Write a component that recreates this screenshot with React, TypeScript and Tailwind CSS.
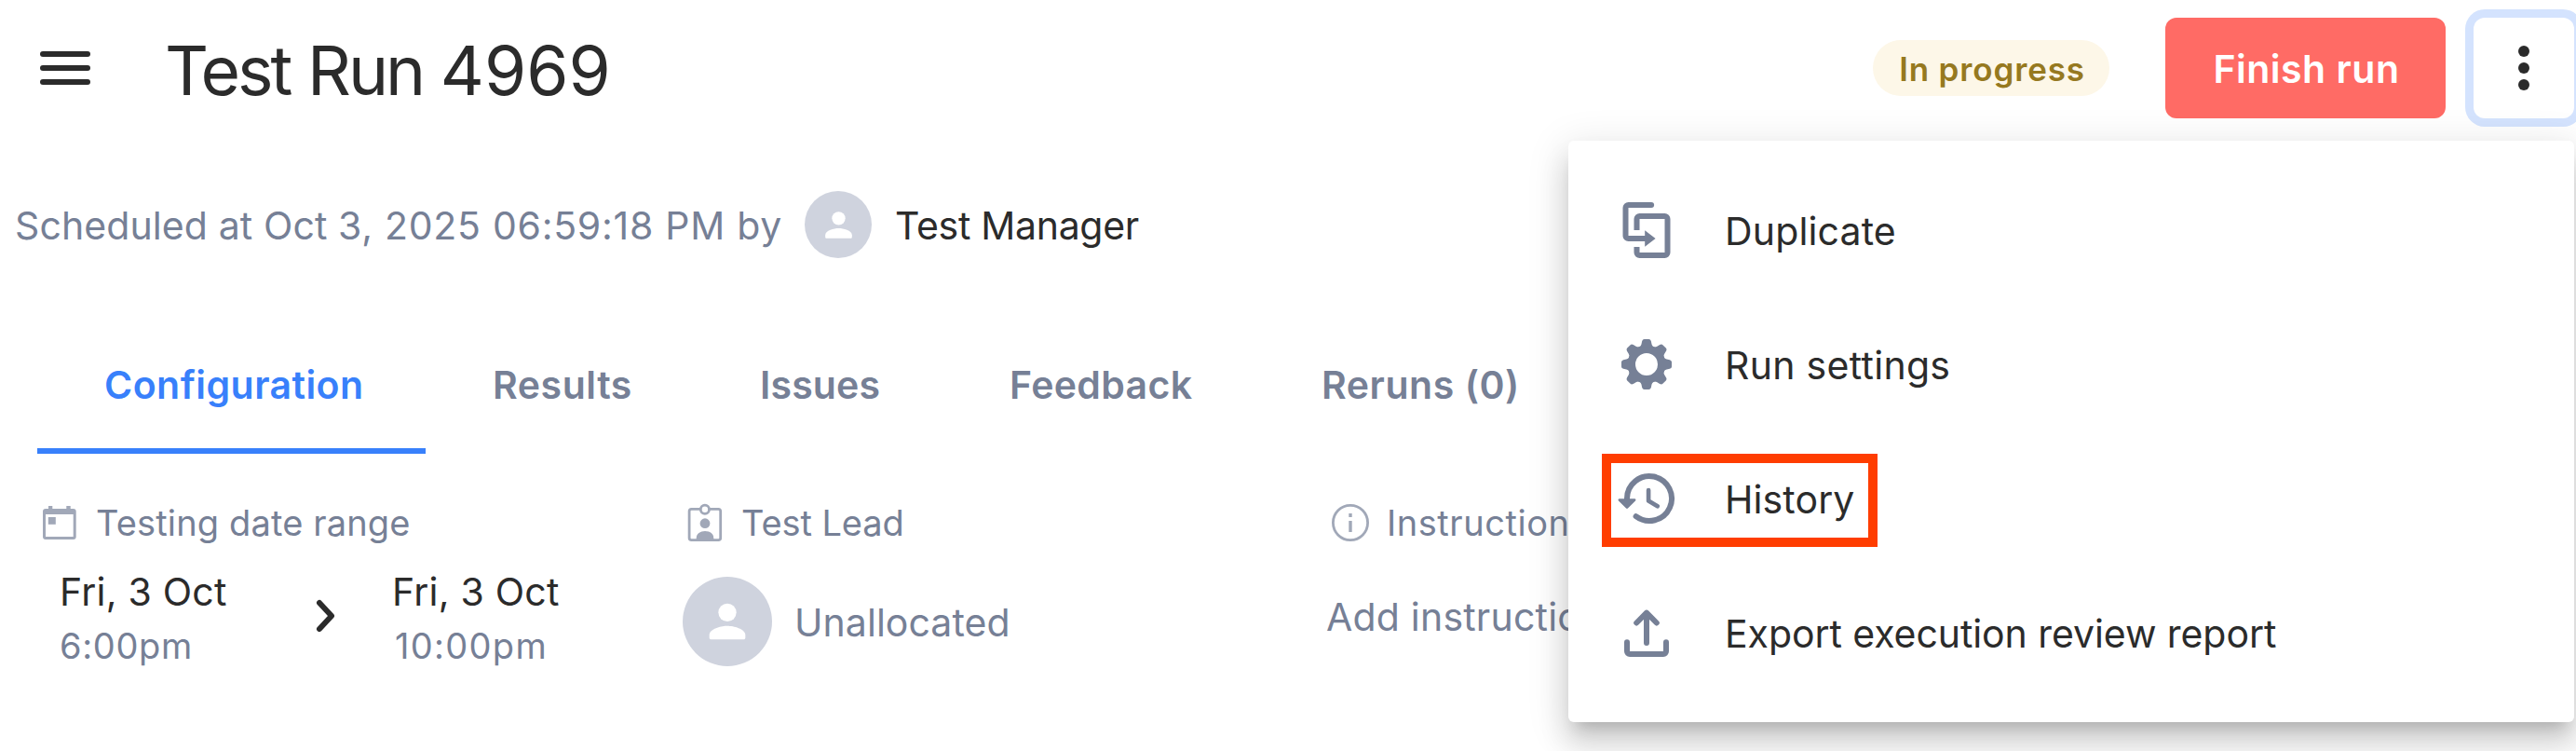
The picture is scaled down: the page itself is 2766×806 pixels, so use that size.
import React from "react";

const PERSON = (
  <>
    <circle cx="12" cy="8" r="4" />
    <path d="M12 14c-2.67 0-8 1.34-8 4v1.2c0 .44.36.8.8.8h14.4c.44 0 .8-.36.8-.8V18c0-2.66-5.33-4-8-4z" />
  </>
);

function Avatar({ large = false }: { large?: boolean }) {
  return (
    <span
      className={
        large
          ? "flex h-24 w-24 shrink-0 items-center justify-center rounded-full bg-[#cfd3de]"
          : "flex h-18 w-18 shrink-0 items-center justify-center rounded-full bg-[#cfd3de]"
      }
    >
      <svg viewBox="0 0 24 24" fill="#ffffff" className={large ? "h-[58px] w-[58px]" : "h-[43px] w-[43px]"}>
        {PERSON}
      </svg>
    </span>
  );
}

function CalendarIcon() {
  return (
    <svg viewBox="0 0 48 48" className="h-12 w-12 shrink-0" fill="#a1a8b8">
      <path
        fillRule="evenodd"
        d="M9 9h3V6h4.3v3h15V6h4.4v3H38.7a3 3 0 0 1 3 3v27a3 3 0 0 1-3 3H9a3 3 0 0 1-3-3V12a3 3 0 0 1 3-3zM9 15v24h29.7V15z"
      />
      <rect x="11.8" y="18" width="8" height="7.8" />
    </svg>
  );
}

function BadgeIcon() {
  return (
    <svg viewBox="0 0 48 48" className="h-12 w-12 shrink-0" fill="#a1a8b8">
      <rect x="7.1" y="9.4" width="33.6" height="33.2" rx="2.4" fill="none" stroke="#a1a8b8" strokeWidth="2.8" />
      <circle cx="23.9" cy="9.7" r="4.6" fill="#ffffff" stroke="#a1a8b8" strokeWidth="2.8" />
      <circle cx="24" cy="24.7" r="5.4" />
      <path d="M14.7 43v-2.6c0-4.6 4.2-7.4 9.3-7.4s9.3 2.8 9.3 7.4V43z" />
    </svg>
  );
}

function InfoIcon() {
  return (
    <svg viewBox="0 0 48 48" className="h-12 w-12 shrink-0" fill="#a1a8b8">
      <circle cx="24" cy="24" r="18.6" fill="none" stroke="#a1a8b8" strokeWidth="2.8" />
      <rect x="22.3" y="14" width="3.4" height="4" />
      <rect x="22.3" y="22" width="3.4" height="12" />
    </svg>
  );
}

function DuplicateIcon() {
  return (
    <svg viewBox="0 0 24 24" className="h-18 w-18 shrink-0" fill="none" stroke="#768096" strokeWidth="2">
      <path d="M13.7 3H5.5a1 1 0 0 0-1 1v10a1 1 0 0 0 1 1h6.3" />
      <circle cx="13.7" cy="3" r="1" fill="#768096" stroke="none" />
      <path d="M8.5 12V8a1 1 0 0 1 1-1h9a1 1 0 0 1 1 1v12a1 1 0 0 1-1 1h-9a1 1 0 0 1-1-1v-2" />
      <path d="M11.4 12.1L15.2 15l-3.8 2.9z" fill="#768096" stroke="none" />
    </svg>
  );
}

const GEAR_TEETH = [0, 45, 90, 135, 180, 225, 270, 315];

function GearIcon() {
  return (
    <svg viewBox="-12 -12 24 24" className="h-18 w-18 shrink-0" fill="#768096">
      <circle r="5.4" fill="none" stroke="#768096" strokeWidth="2.8" />
      {GEAR_TEETH.map((a) => (
        <path
          key={a}
          transform={`rotate(${a})`}
          d="M-2.7 -6.1Q-2 -6.5 -1.85 -7.2L-1.6 -8.3Q-1.4 -9 -.8 -9H.8Q1.4 -9 1.6 -8.3L1.85 -7.2Q2 -6.5 2.7 -6.1Z"
        />
      ))}
    </svg>
  );
}

function HistoryIcon() {
  return (
    <svg viewBox="0 0 24 24" className="h-18 w-18 shrink-0" fill="none" stroke="#768096" strokeLinecap="round" strokeLinejoin="round">
      <path d="M5 12.5V12a8 8 0 1 1 3.2 6.4" strokeWidth="2" />
      <path d="M2.3 12.5H7.7L5 15.2z" fill="#768096" strokeWidth=".9" />
      <path d="M12.7 9v3.8l3.2 1.95" strokeWidth="1.55" />
    </svg>
  );
}

function ExportIcon() {
  return (
    <svg
      viewBox="0 0 24 24"
      className="h-18 w-18 shrink-0"
      fill="none"
      stroke="#768096"
      strokeWidth="2"
      strokeLinecap="round"
      strokeLinejoin="round"
    >
      <path d="M5 15.4V18.7a1 1 0 0 0 1 1h12a1 1 0 0 0 1-1v-3.3" />
      <path d="M12 15.7V4.9M8.4 8.5L12 4.9l3.6 3.6" />
    </svg>
  );
}

const TABS = [
  { label: "Configuration", box: "w-[417px] border-[#3880fb] text-[#3880fb] tracking-[0.46px]" },
  { label: "Results", box: "w-[287px] border-transparent text-[#768096] tracking-[0.55px]" },
  { label: "Issues", box: "w-[268px] border-transparent text-[#768096] tracking-[0.15px]" },
  { label: "Feedback", box: "w-[335px] border-transparent text-[#768096] tracking-[0.35px]" },
  { label: "Reruns (0)", box: "w-[350px] border-transparent text-[#768096] tracking-[0.55px]" },
];

const MENU = [
  { label: "Duplicate", icon: <DuplicateIcon />, track: "tracking-[0.15px]" },
  { label: "Run settings", icon: <GearIcon />, track: "tracking-[0.3px]" },
  { label: "History", icon: <HistoryIcon />, track: "tracking-[0.1px]" },
  { label: "Export execution review report", icon: <ExportIcon />, track: "tracking-[-0.07px]" },
];

export default function App() {
  return (
    <div className="relative h-[806px] w-full overflow-hidden bg-white font-['Inter','Liberation_Sans',sans-serif] text-[41px] leading-[58px] whitespace-nowrap text-[#2b2b2b]">
      <header className="flex h-[146px] items-center pr-[2px] pl-[43px]">
        <button className="flex w-[54px] flex-col gap-[9px]">
          <span className="h-1.5 rounded-full bg-[#2b2b2b]" />
          <span className="h-1.5 rounded-full bg-[#2b2b2b]" />
          <span className="h-1.5 rounded-full bg-[#2b2b2b]" />
        </button>
        <h1 className="ml-20 pt-[5px] text-[73px] leading-[88px] tracking-[-3px] [word-spacing:1px]">
          Test Run <span className="tracking-[0px]">4969</span>
        </h1>
        <span className="mr-[60px] ml-auto flex h-[60px] w-[254px] items-center justify-center rounded-full bg-[#fdf7e8] pt-[2px] pl-[2px] text-[35px] font-semibold tracking-[0.85px] text-[#96791f]">
          In progress
        </span>
        <button className="mr-[30px] flex h-[108px] w-[301px] items-center justify-center rounded-xl bg-[#ff6b65] pt-[2px] pl-[2px] font-semibold tracking-[0.5px] text-white">
          Finish run
        </button>
        <button className="flex h-[108px] w-[108px] flex-col items-center justify-center gap-1.5 rounded-xl bg-white shadow-[0_0_0_9px_#d4e3fe]">
          <span className="h-3 w-3 rounded-full bg-[#2b2b2b]" />
          <span className="h-3 w-3 rounded-full bg-[#2b2b2b]" />
          <span className="h-3 w-3 rounded-full bg-[#2b2b2b]" />
        </button>
      </header>

      <div className="mt-[59px] flex h-18 items-center pl-4">
        <span className="w-[848px] pt-[2px] tracking-[0.72px] text-[#768096]">
          <span className="tracking-[0.1px]">Scheduled at Oct </span>3, 2025 06:59:18 PM by
        </span>
        <Avatar />
        <span className="ml-[25px] pt-[2px] tracking-[-0.3px]">Test Manager</span>
      </div>

      <nav className="mt-[66px] flex h-36 pl-10">
        {TABS.map((t) => (
          <button
            key={t.label}
            className={`flex items-center border-b-[6px] pt-[2px] pl-[72px] text-left font-semibold ${t.box}`}
          >
            {t.label}
          </button>
        ))}
      </nav>

      <main className="mt-[50px] grid grid-cols-[693px_691px_1fr] pl-10">
        <section>
          <div className="flex h-12 items-center gap-[15px] text-[38px] tracking-[0.15px] text-[#768096]">
            <CalendarIcon />
            <span>Testing date range</span>
          </div>
          <div className="mt-[21px] flex items-center pl-6">
            <div className="w-[252px]">
              <div className="tracking-[0.22px]">Fri, 3 Oct</div>
              <div className="text-[38px] tracking-[0.66px] text-[#768096]">6:00pm</div>
            </div>
            <svg
              viewBox="0 0 66 66"
              className="h-[66px] w-[66px] shrink-0"
              fill="none"
              stroke="#2b2b2b"
              strokeWidth="6"
              strokeLinecap="round"
              strokeLinejoin="round"
            >
              <path d="M27 16L40 30L27 44" />
            </svg>
            <div className="ml-[39px]">
              <div className="tracking-[0.22px]">Fri, 3 Oct</div>
              <div className="pl-[3px] text-[38px] tracking-[1.3px] text-[#768096]">10:00pm</div>
            </div>
          </div>
        </section>

        <section>
          <div className="flex h-12 items-center gap-[15px] text-[38px] tracking-[-0.1px] text-[#768096]">
            <BadgeIcon />
            <span>Test Lead</span>
          </div>
          <div className="mt-[34px] flex items-center gap-6 tracking-[0.05px] text-[#768096]">
            <Avatar large />
            <span className="pt-[2px]">Unallocated</span>
          </div>
        </section>

        <section>
          <div className="flex h-12 items-center gap-[15px] pl-[2px] text-[38px] tracking-[0.55px] text-[#768096]">
            <InfoIcon />
            <span>Instructions</span>
          </div>
          <div className="mt-12 tracking-[0.2px] text-[#768096]">Add instructions</div>
        </section>
      </main>

      <div className="absolute top-[151px] left-[1684px] flex h-[624px] w-[1080px] flex-col rounded-md bg-white py-6 shadow-[0_15px_15px_-9px_rgba(0,0,0,0.16),0_24px_30px_3px_rgba(0,0,0,0.11),0_9px_42px_6px_rgba(0,0,0,0.1)]">
        {MENU.map((m) => (
          <div key={m.label} className="flex h-36 items-center gap-12 pl-12">
            {m.icon}
            <span className={`pt-[2px] ${m.track}`}>{m.label}</span>
          </div>
        ))}
        <div className="absolute top-[336px] left-9 h-[100px] w-[296px] border-[10px] border-[#ff3d00]" />
      </div>
    </div>
  );
}
